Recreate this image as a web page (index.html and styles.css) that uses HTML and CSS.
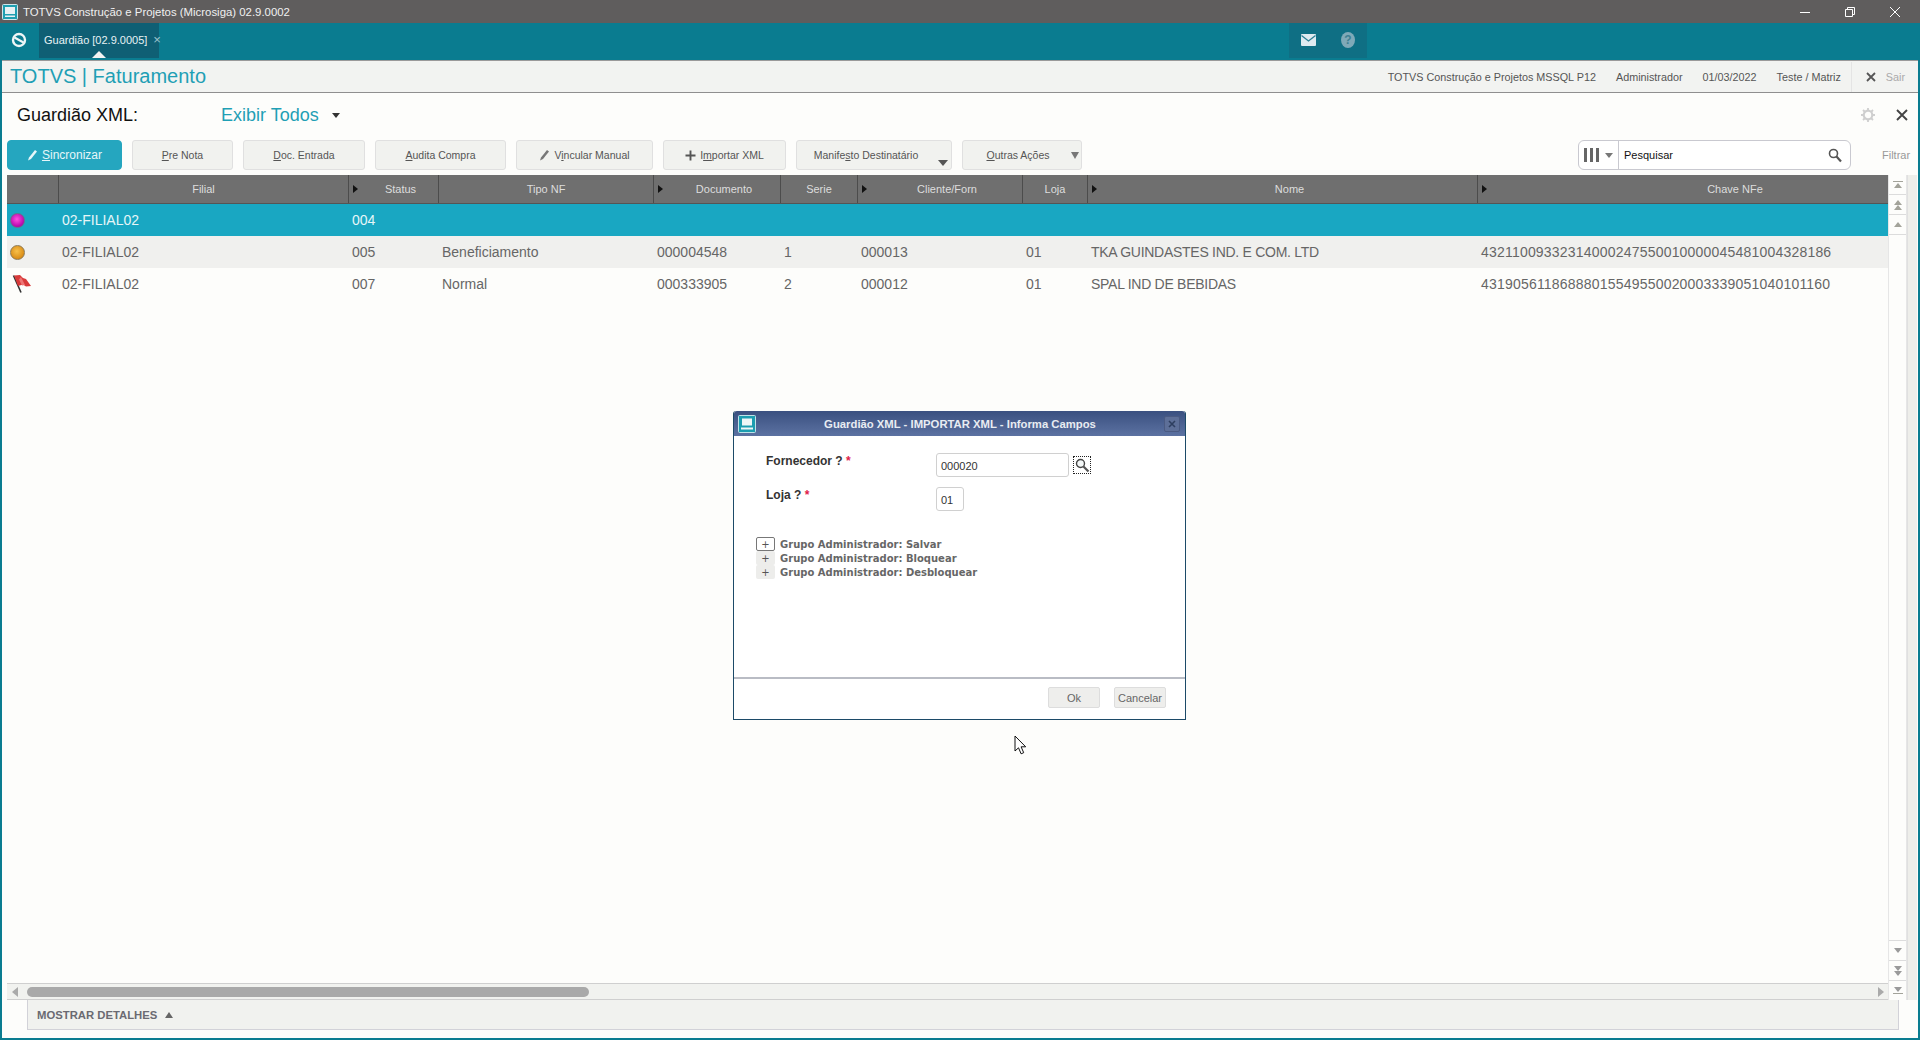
FILE: index.html
```html
<!DOCTYPE html>
<html>
<head>
    <title>TOTVS Construção e Projetos (Microsiga) 02.9.0002</title>
    <link rel="stylesheet" href="styles.css">
</head>
<body>
    <!-- Window title bar -->
    <div class="titlebar">
        <svg class="app-icon" width="16" height="16" viewBox="0 0 16 16">
            <rect x="0.5" y="0.5" width="15" height="15" rx="1" fill="#1f9fb0" stroke="#cfe6ea"></rect>
            <rect x="3" y="3" width="10" height="7" fill="#e8f2f4"></rect>
            <rect x="3" y="11.5" width="10" height="1.5" fill="#e8f2f4"></rect>
        </svg>
        <span class="titlebar-text">TOTVS Construção e Projetos (Microsiga) 02.9.0002</span>
        <div class="window-controls">
            <svg width="12" height="12" viewBox="0 0 12 12"><path d="M1 6.5h10" stroke="#fff" stroke-width="1"></path></svg>
            <svg width="12" height="12" viewBox="0 0 12 12"><path d="M1.5 3.5h7v7h-7z M3.5 3.5v-2h7v7h-2" fill="none" stroke="#fff" stroke-width="1"></path></svg>
            <svg width="12" height="12" viewBox="0 0 12 12"><path d="M1 1l10 10M11 1l-10 10" stroke="#fff" stroke-width="1"></path></svg>
        </div>
    </div>

    <div class="frame">
        <!-- Teal tab bar -->
        <div class="tabbar">
            <svg class="home-icon" width="16" height="16" viewBox="0 0 16 16">
                <circle cx="8" cy="8" r="6" fill="none" stroke="#eef6f7" stroke-width="2.4"></circle>
                <path d="M3.5 5.5l9 5" stroke="#eef6f7" stroke-width="2.2"></path>
            </svg>
            <div class="tab">
                <span>Guardião [02.9.0005]</span>
                <span class="tab-close">×</span>
                <i class="tab-arrow"></i>
            </div>
            <div class="tab-tools">
                <div class="tool">
                    <svg width="15" height="12" viewBox="0 0 15 12">
                        <rect width="15" height="12" rx="1" fill="#dfeaf0"></rect>
                        <path d="M0.5 1.5l7 5.5l7-5.5" fill="none" stroke="#2c7f94" stroke-width="1.3"></path>
                    </svg>
                </div>
                <div class="tool">
                    <svg width="14" height="16" viewBox="0 0 14 16">
                        <ellipse cx="7" cy="8" rx="7" ry="8" fill="#7fa9b8"></ellipse>
                        <text x="7" y="12" text-anchor="middle" class="help-mark">?</text>
                    </svg>
                </div>
            </div>
        </div>

        <!-- Module header -->
        <div class="module-bar">
            <span class="module-title">TOTVS | Faturamento</span>
            <div class="module-info">
                <span class="info-company">TOTVS Construção e Projetos MSSQL P12</span>
                <span>Administrador</span>
                <span>01/03/2022</span>
                <span class="info-branch">Teste / Matriz</span>
                <svg class="exit-icon" width="10" height="10" viewBox="0 0 10 10"><path d="M1 1l8 8M9 1l-8 8" stroke="#555" stroke-width="1.8"></path></svg>
                <span class="exit-label">Sair</span>
            </div>
        </div>

        <div class="content">
            <!-- Page heading -->
            <div class="heading">
                <span class="heading-title">Guardião XML:</span>
                <span class="heading-view">Exibir Todos</span>
                <i class="heading-caret"></i>
                <svg class="gear" width="14" height="14" viewBox="0 0 14 14">
                    <circle cx="7" cy="7" r="4.3" fill="none" stroke="#cfcfcf" stroke-width="2.2"></circle>
                    <path d="M7 0v3M7 11v3M0 7h3M11 7h3M2 2l2 2M10 10l2 2M12 2l-2 2M4 10l-2 2" stroke="#cfcfcf" stroke-width="1.8"></path>
                </svg>
                <svg class="heading-close" width="12" height="12" viewBox="0 0 12 12"><path d="M1 1l10 10M11 1l-10 10" stroke="#444" stroke-width="1.9"></path></svg>
            </div>

            <!-- Toolbar -->
            <div class="toolbar">
                <button class="btn btn-primary btn-sync">
                    <svg width="11" height="12" viewBox="0 0 11 12"><path d="M1 11.5l1-3l6-7.5l2 1.5l-6 7.5z" fill="#e6f6f9"></path></svg>
                    <span><u>S</u>incronizar</span>
                </button>
                <button class="btn btn-pre"><span><u>P</u>re Nota</span></button>
                <button class="btn btn-doc"><span><u>D</u>oc. Entrada</span></button>
                <button class="btn btn-audit"><span><u>A</u>udita Compra</span></button>
                <button class="btn btn-link">
                    <svg width="11" height="12" viewBox="0 0 11 12"><path d="M1 11.5l1-3l6-7.5l2 1.5l-6 7.5z" fill="#777"></path></svg>
                    <span>V<u>i</u>ncular Manual</span>
                </button>
                <button class="btn btn-import">
                    <svg width="11" height="11" viewBox="0 0 11 11"><path d="M5.5 0.5v10M0.5 5.5h10" stroke="#555" stroke-width="1.9"></path></svg>
                    <span>I<u>m</u>portar XML</span>
                </button>
                <button class="btn btn-manifest"><span>Manife<u>s</u>to Destinatário</span><i class="drop-low"></i></button>
                <button class="btn btn-other"><span><u>O</u>utras Ações</span><i class="drop-high"></i></button>

                <div class="search">
                    <div class="search-columns">
                        <i></i><i></i><i></i>
                        <b class="search-caret"></b>
                    </div>
                    <span class="search-text">Pesquisar</span>
                    <svg width="14" height="15" viewBox="0 0 14 15">
                        <circle cx="5.5" cy="5.5" r="4" fill="none" stroke="#555" stroke-width="1.6"></circle>
                        <path d="M8.5 8.5l4.5 5" stroke="#555" stroke-width="2.2"></path>
                    </svg>
                </div>
                <span class="filter-label">Filtrar</span>
            </div>

            <!-- Browse grid with its scrollbars -->
            <div class="browse">
                <div class="browse-main">
                    <div class="grid">
                        <div class="grid-row grid-head">
                            <div class="head-cell"></div>
                            <div class="head-cell">Filial</div>
                            <div class="head-cell"><i class="sort"></i><span>Status</span></div>
                            <div class="head-cell">Tipo NF</div>
                            <div class="head-cell"><i class="sort"></i><span>Documento</span></div>
                            <div class="head-cell">Serie</div>
                            <div class="head-cell"><i class="sort"></i><span>Cliente/Forn</span></div>
                            <div class="head-cell">Loja</div>
                            <div class="head-cell"><i class="sort"></i><span>Nome</span></div>
                            <div class="head-cell head-last"><i class="sort"></i><span>Chave NFe</span></div>
                        </div>
                        <div class="grid-row row-selected">
                            <div class="cell cell-icon"><i class="ball ball-pink"></i></div>
                            <div class="cell">02-FILIAL02</div>
                            <div class="cell">004</div>
                            <div class="cell"></div>
                            <div class="cell"></div>
                            <div class="cell"></div>
                            <div class="cell"></div>
                            <div class="cell"></div>
                            <div class="cell"></div>
                            <div class="cell"></div>
                        </div>
                        <div class="grid-row row-alt">
                            <div class="cell cell-icon"><i class="ball ball-orange"></i></div>
                            <div class="cell">02-FILIAL02</div>
                            <div class="cell">005</div>
                            <div class="cell">Beneficiamento</div>
                            <div class="cell">000004548</div>
                            <div class="cell">1</div>
                            <div class="cell">000013</div>
                            <div class="cell">01</div>
                            <div class="cell cell-name">TKA GUINDASTES IND. E COM. LTD</div>
                            <div class="cell cell-key">43211009332314000247550010000045481004328186</div>
                        </div>
                        <div class="grid-row">
                            <div class="cell cell-icon">
                                <svg width="22" height="20" viewBox="0 0 22 20">
                                    <path d="M3.500 1.500l7.500 17" stroke="#333" stroke-width="1.6"></path>
                                    <path d="M4 1.500l6-0.500l3 3l3 1l5 7l-5 0.500l-3-2l-5 1.500z" fill="#d83a3a"></path>
                                    <path d="M11 3l4 8l-3 0.500l-3-6z" fill="#ee7474"></path>
                                </svg>
                            </div>
                            <div class="cell">02-FILIAL02</div>
                            <div class="cell">007</div>
                            <div class="cell">Normal</div>
                            <div class="cell">000333905</div>
                            <div class="cell">2</div>
                            <div class="cell">000012</div>
                            <div class="cell">01</div>
                            <div class="cell cell-name">SPAL IND DE BEBIDAS</div>
                            <div class="cell cell-key">43190561186888015549550020003339051040101160</div>
                        </div>
                    </div>
                    <div class="hscroll">
                        <i class="arrow-left"></i>
                        <div class="hscroll-track"><div class="hscroll-thumb"></div></div>
                        <i class="arrow-right"></i>
                    </div>
                </div>
                <div class="vscroll">
                    <div class="vscroll-buttons">
                        <div class="vbtn"><i class="bar-top"></i><i class="arrow-up"></i></div>
                        <div class="vbtn"><i class="arrow-up"></i><i class="arrow-up"></i></div>
                        <div class="vbtn"><i class="arrow-up"></i></div>
                        <div class="vscroll-gap"></div>
                        <div class="vbtn vbtn-line"><i class="arrow-down"></i></div>
                        <div class="vbtn vbtn-line"><i class="arrow-down"></i><i class="arrow-down"></i></div>
                        <div class="vbtn vbtn-line"><i class="arrow-down"></i><i class="bar-bottom"></i></div>
                    </div>
                    <div class="vscroll-track"></div>
                </div>
            </div>

            <!-- Details toggle -->
            <div class="details">
                <span>MOSTRAR DETALHES</span>
                <i class="details-arrow"></i>
            </div>
        </div>
    </div>

    <!-- Modal dialog -->
    <div class="dialog">
        <div class="dialog-title">
            <svg width="18" height="18" viewBox="0 0 18 18">
                <rect x="0.5" y="0.5" width="17" height="17" rx="1" fill="#1c9db0" stroke="#bfe2e8"></rect>
                <rect x="4" y="3.5" width="10" height="7" fill="#eef6f7"></rect>
                <rect x="3" y="12.5" width="12" height="2" fill="#eef6f7"></rect>
            </svg>
            <span>Guardião XML - IMPORTAR XML - Informa Campos</span>
            <div class="dialog-close">
                <svg width="8" height="8" viewBox="0 0 8 8"><path d="M1 1l6 6M7 1l-6 6" stroke="#2e3f60" stroke-width="1.6"></path></svg>
            </div>
        </div>
        <div class="dialog-body">
            <div class="form">
                <label class="form-label">Fornecedor ? <em>*</em></label>
                <div class="form-field">
                    <div class="input input-wide">000020</div>
                    <div class="lookup">
                        <svg width="15" height="15" viewBox="0 0 15 15">
                            <circle cx="5.5" cy="5.5" r="4" fill="#f4f8f8" stroke="#444" stroke-width="1.4"></circle>
                            <path d="M8.5 8.5l5 5" stroke="#555" stroke-width="2.2"></path>
                        </svg>
                    </div>
                </div>
                <label class="form-label">Loja ? <em>*</em></label>
                <div class="form-field">
                    <div class="input input-small">01</div>
                </div>
            </div>
            <div class="tree">
                <div class="tree-row"><span class="tree-toggle tree-toggle-focus">+</span>Grupo Administrador: Salvar</div>
                <div class="tree-row"><span class="tree-toggle">+</span>Grupo Administrador: Bloquear</div>
                <div class="tree-row"><span class="tree-toggle">+</span>Grupo Administrador: Desbloquear</div>
            </div>
        </div>
        <div class="dialog-footer">
            <button class="dialog-btn">Ok</button>
            <button class="dialog-btn">Cancelar</button>
        </div>
    </div>

    <!-- Mouse pointer -->
    <svg class="pointer" width="13" height="20" viewBox="0 0 13 20">
        <path d="M1 1v15l3.5-3.2l2.6 6l2.6-1.1l-2.6-5.9h4.6z" fill="#fff" stroke="#111" stroke-width="1"></path>
    </svg>
</body>
</html>
```

FILE: styles.css
```css
* {
    box-sizing: border-box;
}
html, body {
    margin: 0;
    height: 100%;
}
body {
    width: 1920px;
    height: 1040px;
    overflow: hidden;
    display: flex;
    flex-direction: column;
    position: relative;
    font-family: "Liberation Sans", Arial, sans-serif;
    font-size: 11px;
    color: #666666;
    background-color: #fdfdfb;
}
i {
    display: block;
    font-style: normal;
}

/* Window title bar */
.titlebar {
    height: 23px;
    flex: none;
    display: flex;
    align-items: center;
    padding-left: 2px;
    background-color: #5f5d5d;
    color: #f0f0f0;
    font-size: 11.4px;
}
.titlebar-text {
    margin-left: 5px;
}
.window-controls {
    margin-left: auto;
    display: flex;
    gap: 33px;
    padding-right: 19px;
}

.frame {
    flex: 1;
    min-height: 0;
    display: flex;
    flex-direction: column;
    border: solid #0a7c90;
    border-width: 0 2px 2px 2px;
}

/* Tab bar */
.tabbar {
    height: 37px;
    flex: none;
    display: flex;
    margin: 0 -2px;
    padding-left: 11px;
    background-color: #0a7c90;
    color: #e8f2f4;
}
.home-icon {
    margin-top: 9px;
}
.tab {
    position: relative;
    width: 120px;
    height: 35px;
    margin-left: 12px;
    padding: 11px 0 0 5px;
    display: flex;
    gap: 6px;
    white-space: nowrap;
    background-color: #0f5f74;
}
.tab-close {
    color: #9fc4cd;
    font-size: 13px;
    line-height: 12px;
}
.tab-arrow {
    position: absolute;
    left: 53px;
    bottom: 0;
    border: 7px solid transparent;
    border-top: 0;
    border-bottom-color: #f3f3f3;
}
.tab-tools {
    margin-left: 1130px;
    display: flex;
    height: 35px;
    background-color: #0f6f84;
}
.tool {
    width: 39px;
    display: flex;
    align-items: center;
    justify-content: center;
    padding-bottom: 2px;
}
.help-mark {
    font-family: "Liberation Sans", Arial, sans-serif;
    font-size: 12px;
    font-weight: bold;
    fill: #3e7f92;
}

/* Module header */
.module-bar {
    height: 33px;
    flex: none;
    display: flex;
    align-items: center;
    padding: 0 13px 0 8px;
    background-color: #f2f3f1;
    border-top: 1px solid #9a9a9a;
    border-bottom: 1px solid #8f8f8f;
}
.module-title {
    font-size: 20px;
    color: #1f9fb5;
}
.module-info {
    margin-left: auto;
    display: flex;
    align-items: center;
    font-size: 10.8px;
    color: #555555;
}
.module-info span {
    margin-left: 20px;
}
.module-info .info-branch {
    padding-right: 10px;
    border-right: 1px solid #e4e4e4;
    line-height: 30px;
}
.exit-icon {
    margin-left: 14px;
}
.module-info .exit-label {
    margin-left: 10px;
    color: #aaaaaa;
}

.content {
    flex: 1;
    min-height: 0;
    display: flex;
    flex-direction: column;
    padding-left: 5px;
}

/* Page heading */
.heading {
    height: 47px;
    flex: none;
    display: flex;
    align-items: center;
    padding: 0 10px 3px 10px;
    font-size: 18px;
}
.heading-title {
    color: #111111;
    width: 204px;
}
.heading-view {
    color: #1f9fb5;
}
.heading-caret {
    margin-left: 13px;
    border: 4px solid transparent;
    border-bottom: 0;
    border-top: 5px solid #333333;
}
.gear {
    margin-left: auto;
    margin-right: 21px;
}

/* Toolbar */
.toolbar {
    height: 30px;
    flex: none;
    display: flex;
    gap: 10px;
    padding-right: 9px;
}
.btn {
    position: relative;
    height: 30px;
    padding: 0;
    display: flex;
    align-items: center;
    justify-content: center;
    gap: 4px;
    font-family: inherit;
    font-size: 10.5px;
    color: #555555;
    background-color: #f1f2ef;
    border: 1px solid #e0e0e0;
    border-radius: 3px;
}
.btn-primary {
    color: #e6f6f9;
    font-size: 12px;
    background-color: #25a6bf;
    border-color: #25a6bf;
    border-radius: 4px;
}
.btn-sync { width: 115px; }
.btn-pre { width: 101px; }
.btn-doc { width: 122px; }
.btn-audit { width: 131px; }
.btn-link { width: 137px; }
.btn-import { width: 123px; }
.btn-manifest { width: 156px; padding-right: 16px; }
.btn-other { width: 120px; padding-right: 8px; }
.drop-low {
    position: absolute;
    right: 3px;
    bottom: 3px;
    border: 5px solid transparent;
    border-bottom: 0;
    border-top: 6px solid #555555;
}
.drop-high {
    position: absolute;
    right: 2px;
    top: 11px;
    border: 4px solid transparent;
    border-bottom: 0;
    border-top: 7px solid #777777;
}
.search {
    width: 273px;
    height: 30px;
    margin-left: auto;
    display: flex;
    align-items: center;
    padding-right: 8px;
    color: #111111;
    background-color: #ffffff;
    border: 1px solid #c9c9d0;
    border-radius: 6px;
}
.search-columns {
    width: 40px;
    height: 28px;
    flex: none;
    display: flex;
    align-items: center;
    gap: 2px;
    padding-left: 5px;
    border-right: 1px solid #c9c9d0;
}
.search-columns i {
    width: 3px;
    height: 14px;
    background-color: #666666;
    margin-right: 1px;
}
.search-caret {
    margin-left: 3px;
    border: 4px solid transparent;
    border-bottom: 0;
    border-top: 5px solid #777777;
}
.search-text {
    margin-left: 5px;
    margin-right: auto;
}
.filter-label {
    width: 48px;
    padding-left: 21px;
    line-height: 30px;
    color: #999999;
    white-space: nowrap;
}

/* Browse grid */
.browse {
    flex: 1;
    min-height: 0;
    display: flex;
    margin-top: 5px;
}
.browse-main {
    flex: 1;
    min-width: 0;
    display: flex;
    flex-direction: column;
}
.grid {
    flex: 1;
    min-height: 0;
    overflow: hidden;
}
.grid-row {
    display: grid;
    grid-template-columns: 52px 290px 90px 215px 127px 77px 165px 65px 390px 500px;
    width: 1971px;
    height: 32px;
    font-size: 14px;
}
.grid-head {
    height: 29px;
    font-size: 11px;
    color: #dddddd;
    background-color: #6f6f6f;
    border-bottom: 1px solid #555555;
}
.head-cell {
    display: flex;
    align-items: center;
    justify-content: center;
    text-align: center;
    border-right: 1px solid #4c4c4c;
}
.head-cell span {
    flex: 1;
}
.head-last {
    border-right: 0;
}
.sort {
    flex: none;
    width: 5px;
    height: 8px;
    margin: 0 5px 0 4px;
    border-left: 5px solid #111111;
    border-top: 4px solid transparent;
    border-bottom: 4px solid transparent;
}
.cell {
    display: flex;
    align-items: center;
    padding-left: 3px;
    white-space: nowrap;
}
.cell-name {
    letter-spacing: -0.28px;
}
.cell-key {
    letter-spacing: 0.2px;
}
.cell-icon {
    padding-left: 3px;
}
.row-selected {
    background-color: #19a7c2;
    color: #e6f6f8;
}
.row-alt {
    background-color: #f0f0ee;
}
.ball {
    width: 15px;
    height: 15px;
    border-radius: 50%;
}
.ball-pink {
    background: radial-gradient(circle at 45% 40%, #ff4fe0, #b000a8 75%);
    border: 1px solid #6f6a8a;
}
.ball-orange {
    background: radial-gradient(circle at 45% 40%, #f7c04a, #d88a14 75%);
    border: 1px solid #8d7a55;
}

/* Scrollbars */
.hscroll {
    height: 17px;
    flex: none;
    display: flex;
    align-items: center;
    padding: 0 5px;
    background-color: #f1f2ef;
    border: solid #cfcfcf;
    border-width: 1px 0;
}
.hscroll-track {
    flex: 1;
    padding: 0 9px;
}
.hscroll-thumb {
    width: 562px;
    height: 10px;
    background-color: #a9a9a9;
    border-radius: 5px;
}
.arrow-left {
    border: 5px solid transparent;
    border-left: 0;
    border-right: 6px solid #aaaaaa;
}
.arrow-right {
    border: 5px solid transparent;
    border-right: 0;
    border-left: 6px solid #aaaaaa;
}
.vscroll {
    width: 30px;
    flex: none;
    display: flex;
    margin-left: -1px;
}
.vscroll-buttons {
    width: 19px;
    display: flex;
    flex-direction: column;
    border-left: 1px solid #e6e6e6;
    border-right: 1px solid #e6e6e6;
}
.vbtn {
    height: 20px;
    flex: none;
    display: flex;
    flex-direction: column;
    align-items: center;
    justify-content: center;
    border-bottom: 1px solid #dcdcdc;
}
.vbtn-line {
    border-top: 1px solid #dcdcdc;
    border-bottom: 0;
}
.vscroll-gap {
    flex: 1;
}
.vscroll-track {
    width: 10px;
    background-color: #eeeeea;
    border-left: 1px solid #e0e0e0;
}
.arrow-up {
    border: 4px solid transparent;
    border-top: 0;
    border-bottom: 5px solid #a3a39a;
}
.arrow-down {
    border: 4px solid transparent;
    border-bottom: 0;
    border-top: 5px solid #9a9a9a;
}
.bar-top, .bar-bottom {
    width: 10px;
    height: 1px;
    background-color: #a3a39a;
}
.bar-top {
    margin-bottom: 1px;
}
.bar-bottom {
    margin-top: 1px;
}

/* Details toggle */
.details {
    height: 30px;
    flex: none;
    display: flex;
    align-items: center;
    gap: 8px;
    margin: 0 19px 8px 20px;
    padding-left: 9px;
    font-size: 11.3px;
    font-weight: bold;
    color: #6a6a72;
    background-color: #f1f2ef;
    border: solid #d2d2d8;
    border-width: 0 1px 1px 1px;
}
.details-arrow {
    border: 4px solid transparent;
    border-top: 0;
    border-bottom: 6px solid #666666;
}

/* Dialog */
.dialog {
    position: absolute;
    left: 733px;
    top: 411px;
    width: 453px;
    height: 309px;
    display: flex;
    flex-direction: column;
    background-color: #ffffff;
    border: 1px solid #1c4a68;
    border-top: 0;
    border-radius: 3px 3px 0 0;
}
.dialog-title {
    height: 25px;
    flex: none;
    display: flex;
    align-items: center;
    padding: 0 5px 0 4px;
    font-size: 11.3px;
    font-weight: bold;
    color: #e8ecf2;
    background: linear-gradient(#3a5080, #5c72a2);
    border-radius: 3px 3px 0 0;
}
.dialog-title span {
    flex: 1;
    text-align: center;
}
.dialog-close {
    width: 16px;
    height: 16px;
    display: flex;
    align-items: center;
    justify-content: center;
    background-color: #5d6f98;
    border: 1px solid #4a5a82;
    border-radius: 2px;
}
.dialog-body {
    flex: 1;
    min-height: 0;
    padding: 17px 0 0 22px;
}
.form {
    display: grid;
    grid-template-columns: 170px 1fr;
    row-gap: 10px;
    padding-left: 10px;
}
.form-label {
    padding-top: 1px;
    font-size: 12px;
    font-weight: bold;
    color: #333333;
    line-height: 14px;
}
.form-label em {
    font-style: normal;
    color: #e0204a;
}
.form-field {
    display: flex;
    align-items: center;
    gap: 4px;
}
.input {
    height: 24px;
    padding: 6px 0 0 4px;
    font-size: 11px;
    color: #333333;
    background-color: #ffffff;
    border: 1px solid #d0d0d0;
    border-radius: 3px;
}
.input-wide {
    width: 133px;
}
.input-small {
    width: 28px;
}
.lookup {
    width: 18px;
    height: 18px;
    display: flex;
    align-items: center;
    justify-content: center;
    border: 1px dotted #222222;
}
.tree {
    margin-top: 26px;
    font-family: "DejaVu Sans", Verdana, sans-serif;
    font-size: 10px;
    font-weight: bold;
    color: #666666;
}
.tree-row {
    height: 14px;
    display: flex;
    align-items: center;
    gap: 5px;
}
.tree-toggle {
    width: 19px;
    height: 14px;
    flex: none;
    display: flex;
    align-items: center;
    justify-content: center;
    font-weight: normal;
    color: #555555;
    background-color: #ededeb;
    border-radius: 2px;
}
.tree-toggle-focus {
    background-color: #ffffff;
    border: 1px solid #777777;
}
.dialog-footer {
    height: 42px;
    flex: none;
    display: flex;
    justify-content: flex-end;
    gap: 14px;
    padding: 8px 19px 0 0;
    border-top: 2px solid #b9bcc4;
}
.dialog-btn {
    width: 52px;
    height: 21px;
    padding: 0;
    font-family: inherit;
    font-size: 11px;
    color: #666666;
    background-color: #eeeeec;
    border: 1px solid #dddddd;
    border-radius: 2px;
}

.pointer {
    position: absolute;
    left: 1014px;
    top: 735px;
}
```
